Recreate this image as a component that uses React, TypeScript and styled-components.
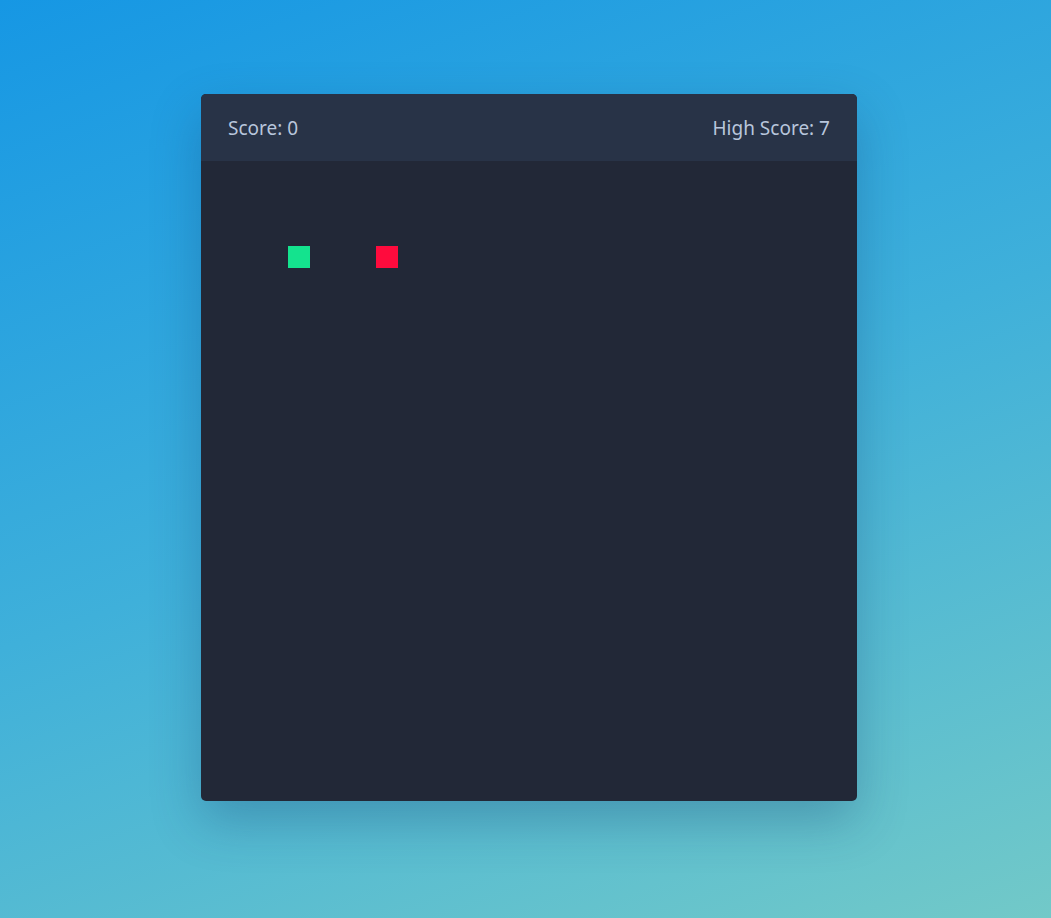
import React from "react";
import styled, { createGlobalStyle } from "styled-components";

const Global = createGlobalStyle`
  html, body { margin: 0; padding: 0; height: 100%; }
  body {
    font-family: "Noto Sans", "Open Sans", sans-serif;
    background: linear-gradient(160deg, #1697e4 0%, #3fb0da 50%, #72c9c8 100%);
    min-height: 918px;
  }
`;

const Page = styled.div`
  display: flex;
  justify-content: center;
  padding: 94px 0 0 7px;
  box-sizing: border-box;
  min-height: 918px;
`;

const Card = styled.div`
  width: 656px;
  border-radius: 5px;
  overflow: hidden;
  background: #222837;
  box-shadow: 0 20px 50px rgba(20, 60, 110, 0.3);
  align-self: flex-start;
`;

const Header = styled.div`
  height: 67px;
  background: #283347;
  display: flex;
  align-items: center;
  justify-content: space-between;
  padding: 0 27px;
  color: #b8c6dc;
  font-size: 19px;
`;

const Board = styled.div`
  position: relative;
  height: 640px;
`;

const Cell = styled.div<{ $color: string }>`
  position: absolute;
  width: calc(100% / 30);
  height: calc(100% / 30);
  background: ${(p) => p.$color};
`;

const GRID = 30;
const snake = [{ x: 4, y: 4 }];
const food = { x: 8, y: 4 };

export default function App() {
  return (
    <>
      <Global />
      <Page>
        <Card>
          <Header>
            <span>Score: 0</span>
            <span>High Score: 7</span>
          </Header>
          <Board>
            {snake.map((s, i) => (
              <Cell
                key={i}
                $color="#14e38e"
                style={{ left: `${(s.x / GRID) * 100}%`, top: `${(s.y / GRID) * 100}%` }}
              />
            ))}
            <Cell
              $color="#ff0b3d"
              style={{ left: `${(food.x / GRID) * 100}%`, top: `${(food.y / GRID) * 100}%` }}
            />
          </Board>
        </Card>
      </Page>
    </>
  );
}
